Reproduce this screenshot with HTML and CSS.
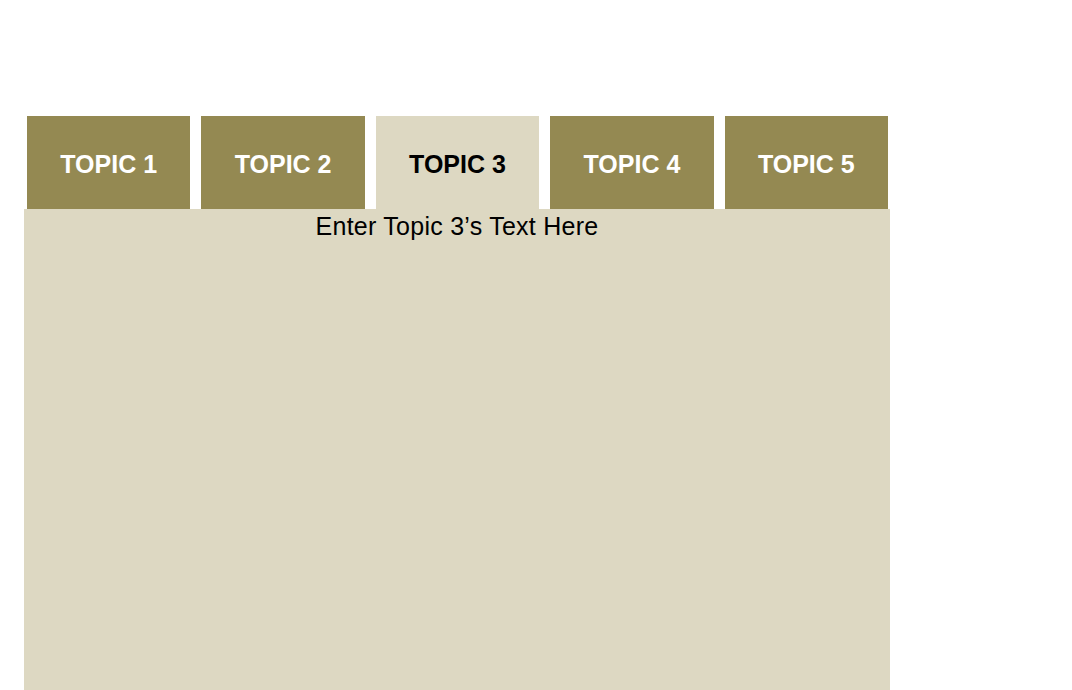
FILE: index.html
```html
<!DOCTYPE html>
<html lang="en">
<head>
    <meta charset="UTF-8">
    <meta name="viewport" content="width=device-width, initial-scale=1.0">
    <title>Topics</title>
    <link rel="stylesheet" href="styles.css">
</head>
<body>
    <div class="tabs-wrap">
        <div class="tab-bar">
            <div class="tab">TOPIC 1</div>
            <div class="tab">TOPIC 2</div>
            <div class="tab active">TOPIC 3</div>
            <div class="tab">TOPIC 4</div>
            <div class="tab">TOPIC 5</div>
        </div>
        <div class="tab-panel">
            <p>Enter Topic 3’s Text Here</p>
        </div>
    </div>
</body>
</html>
```

FILE: styles.css
```css
body {
    margin: 0;
    background: #ffffff;
    font-family: 'Liberation Sans', Arial, sans-serif;
}

.tabs-wrap {
    width: 866px;
    padding: 116px 0 0 24px;
}

.tab-bar {
    display: flex;
    gap: 11px;
    padding: 0 2px 0 3px;
}

.tab {
    flex: 1;
    height: 93px;
    box-sizing: border-box;
    padding-top: 4px;
    display: flex;
    align-items: center;
    justify-content: center;
    background: #948952;
    color: #ffffff;
    font-size: 25px;
    font-weight: bold;
}

.tab.active {
    background: #ddd8c2;
    color: #000000;
}

.tab-panel {
    background: #ddd8c2;
    min-height: 500px;
    padding-top: 3px;
}

.tab-panel p {
    margin: 0;
    text-align: center;
    font-size: 25px;
    letter-spacing: 0.25px;
    color: #000000;
}
```
